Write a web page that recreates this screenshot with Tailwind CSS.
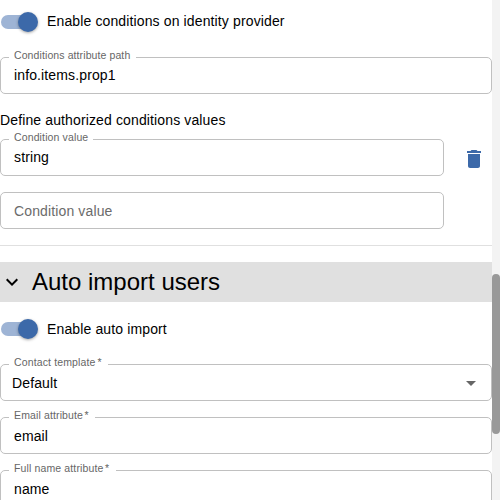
<!DOCTYPE html>
<html lang="en">
<head>
<meta charset="utf-8">
<title>Identity provider</title>
<script src="https://cdn.jsdelivr.net/npm/@tailwindcss/browser@4"></script>
</head>
<body class="bg-white">
<div class="flex w-[500px] h-[500px] overflow-hidden bg-white text-black text-[14px] leading-5 tracking-[0.13px] font-['Liberation_Sans',Arial,sans-serif]">
  <main class="w-[492px] h-[500px] flex flex-col overflow-hidden shrink-0">
    <div class="flex items-center h-[43px] pl-px shrink-0">
      <div class="flex items-center justify-end w-[34px] h-[14px] rounded-full bg-[#9eb4d5] mr-3">
        <span class="size-5 rounded-full bg-[#3c69a9] shadow-[0_1px_3px_rgba(0,0,0,0.35)] -mr-[3px] shrink-0"></span>
      </div>
      <span class="pb-0.5">Enable conditions on identity provider</span>
    </div>
    <div class="relative mt-[14px] h-[37px] shrink-0 border border-[#c0c0c0] rounded-[5px] flex items-center pl-[13px]">
      <span class="absolute left-2 -top-[9px] w-[127px] h-3 pl-[5px] bg-white text-[10.5px] leading-3 tracking-[0.1px] text-[#666] whitespace-nowrap">Conditions attribute path</span>
      <span class="pb-px">info.items.prop1</span>
    </div>
    <p class="mt-4 h-5 shrink-0">Define authorized conditions values</p>
    <div class="flex items-center mt-[9px] shrink-0">
      <div class="relative w-[444px] h-[37px] border border-[#c0c0c0] rounded-[5px] flex items-center pl-[13px]">
        <span class="absolute left-2 -top-[9px] w-[84px] h-3 pl-[5px] bg-white text-[10.5px] leading-3 text-[#666] whitespace-nowrap">Condition value</span>
        <span class="pb-px">string</span>
      </div>
      <svg class="ml-[18px] mt-[3px] size-6 fill-[#3c69a9]" viewBox="0 0 24 24"><path d="M6 19c0 1.100.9 2 2 2h8c1.100 0 2-.9 2-2V7H6v12zM19 4h-3.500l-1-1h-5l-1 1H5v2h14V4z"/></svg>
    </div>
    <div class="w-[444px] h-[37px] mt-4 shrink-0 border border-[#c0c0c0] rounded-[5px] flex items-center pl-[13px] text-[#6b6b6b]">Condition value</div>
    <div class="h-px mt-4 bg-[#e0e0e0] shrink-0"></div>
    <h2 class="flex items-center h-10 mt-4 bg-[#e0e0e0] text-[24px] font-normal shrink-0 tracking-normal">
      <svg class="size-6 mr-2" viewBox="0 0 24 24"><path d="M16.590 8.590 12 13.170 7.410 8.590 6 10l6 6 6-6z"/></svg>
      <span>Auto import users</span>
    </h2>
    <div class="flex items-center h-[54px] pl-px shrink-0">
      <div class="flex items-center justify-end w-[34px] h-[14px] rounded-full bg-[#9eb4d5] mr-3">
        <span class="size-5 rounded-full bg-[#3c69a9] shadow-[0_1px_3px_rgba(0,0,0,0.35)] -mr-[3px] shrink-0"></span>
      </div>
      <span>Enable auto import</span>
    </div>
    <div class="relative mt-2 h-[37px] shrink-0 border border-[#c0c0c0] rounded-[5px] flex items-center justify-between pl-[11px] pr-2">
      <span class="absolute left-2 -top-[9px] w-[99px] h-3 pl-[5px] bg-white text-[10.5px] leading-3 text-[#666] whitespace-nowrap">Contact template<span class="-ml-px"> *</span></span>
      <span>Default</span>
      <svg class="size-6 fill-[#666]" viewBox="0 0 24 24"><path d="m7 10 5 5 5-5z"/></svg>
    </div>
    <div class="relative mt-4 h-[37px] shrink-0 border border-[#c0c0c0] rounded-[5px] flex items-center pl-[13px]">
      <span class="absolute left-2 -top-[9px] w-[86px] h-3 pl-[5px] bg-white text-[10.5px] leading-3 text-[#666] whitespace-nowrap">Email attribute<span class="-ml-[1.5px]"> *</span></span>
      <span>email</span>
    </div>
    <div class="relative mt-4 h-[37px] shrink-0 border border-[#c0c0c0] rounded-[5px] flex items-center pl-[13px]">
      <span class="absolute left-2 -top-[9px] w-[107px] h-3 pl-[5px] bg-white text-[10.5px] leading-3 text-[#666] whitespace-nowrap">Full name attribute<span class="-ml-[1.5px]"> *</span></span>
      <span>name</span>
    </div>
  </main>
  <aside class="w-2 h-[500px] bg-[#f3f3f3] pt-[274px] shrink-0">
    <div class="w-2 h-[160px] rounded-full bg-[#999]"></div>
  </aside>
</div>
</body>
</html>
